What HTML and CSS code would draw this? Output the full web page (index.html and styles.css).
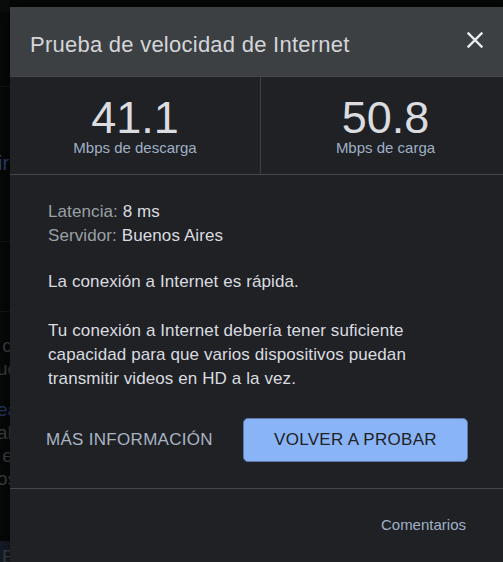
FILE: index.html
```html
<!DOCTYPE html>
<html lang="es">
<head>
<meta charset="utf-8">
<title>Prueba de velocidad de Internet</title>
<link rel="stylesheet" href="styles.css">
</head>
<body>
<div class="page">
  <div class="page-top"></div>
  <div class="page-row r1"></div>
  <div class="page-row r2"><span class="bg-link">ir</span></div>
  <div class="page-row r3"></div>
  <div class="page-text">
    <p class="bg-t">&nbsp;c</p>
    <p class="bg-t">ue</p>
    <p class="bg-l">ea</p>
    <p class="bg-t">ab</p>
    <p class="bg-t">&nbsp;e</p>
    <p class="bg-t">os</p>
  </div>
  <div class="page-bottom"><span>E</span></div>
</div>

<div class="dialog" role="dialog">
  <div class="dlg-head">
    <h1 class="dlg-title">Prueba de velocidad de Internet</h1>
    <button class="close" aria-label="Cerrar">
      <svg viewBox="0 0 24 24"><path d="M19 6.41 17.59 5 12 10.59 6.41 5 5 6.41 10.59 12 5 17.59 6.41 19 12 13.41 17.59 19 19 17.59 13.41 12z" fill="currentColor"/></svg>
    </button>
  </div>
  <div class="stats">
    <div class="stat">
      <div class="stat-num">41.1</div>
      <div class="stat-label">Mbps de descarga</div>
    </div>
    <div class="stat">
      <div class="stat-num">50.8</div>
      <div class="stat-label">Mbps de carga</div>
    </div>
  </div>
  <div class="dlg-body">
    <div class="meta">
      <div><span class="k">Latencia:</span> <span class="v">8 ms</span></div>
      <div><span class="k">Servidor:</span> <span class="v">Buenos Aires</span></div>
    </div>
    <p class="msg">La conexión a Internet es rápida.</p>
    <p class="msg">Tu conexión a Internet debería tener suficiente capacidad para que varios dispositivos puedan transmitir videos en HD a la vez.</p>
    <div class="actions">
      <button class="btn-text">MÁS INFORMACIÓN</button>
      <button class="btn-primary">VOLVER A PROBAR</button>
    </div>
  </div>
  <div class="dlg-foot">
    <a class="feedback">Comentarios</a>
  </div>
</div>
</body>
</html>
```
FILE: styles.css
```css
html, body {
  margin: 0;
  padding: 0;
  overflow: hidden;
  height: 100%;
}
body {
  background: #060707;
  font-family: "Liberation Sans", Arial, sans-serif;
  position: relative;
}
.page {
  height: 562px;
  width: 10px;
  overflow: hidden;
  display: flex;
  flex-direction: column;
}
.page-top {
  height: 12px;
  background: #0b0c0c;
}
.page-row { border-bottom: 1px solid #141616; }
.r1 { height: 74px; }
.r2 { height: 154px; display: flex; align-items: center; }
.bg-link {
  color: #2a3f6e;
  font-size: 20px;
  margin-left: -2px;
  white-space: nowrap;
  margin-top: -2px;
}
.r3 { height: 69px; }
.page-text {
  padding-top: 22px;
  margin-left: -3px;
}
.page-text p {
  margin: 0;
  font-size: 19px;
  line-height: 23px;
  white-space: nowrap;
  color: #3c3f42;
}
.page-text p.bg-l { color: #243660; margin-top: 18px; }
.page-bottom {
  margin-top: auto;
  height: 21px;
  background: #161b27;
  color: #3c3f42;
  font-size: 19px;
  overflow: hidden;
  padding-left: 2px;
  line-height: 32px;
}

/* dialog overlay */
.dialog {
  position: absolute;
  left: 10px;
  top: 7px;
  width: 500px;
  height: 580px;
  background: #202124;
  color: #dadce0;
  box-shadow: 0 0 12px rgba(0,0,0,0.6);
}
.dlg-head {
  height: 70px;
  background: #3c4043;
  border-bottom: 1px solid #45484b;
  display: flex;
  align-items: center;
  justify-content: space-between;
  padding: 0 21px 0 20px;
  box-sizing: border-box;
}
.dlg-title {
  margin: 0;
  font-weight: normal;
  font-size: 22px;
  letter-spacing: 0.25px;
  color: #d4d6d9;
  padding-top: 6px;
}
.close {
  background: none;
  border: none;
  padding: 0;
  color: #e8eaed;
  width: 28px;
  height: 28px;
  margin-top: -4px;
  cursor: pointer;
}
.close svg { display: block; width: 28px; height: 28px; }

.stats {
  display: grid;
  grid-template-columns: 250px 250px;
  border-bottom: 1px solid #45484b;
}
.stat {
  text-align: center;
  padding: 21px 0 16px;
}
.stat + .stat { border-left: 1px solid #3c4043; }
.stat-num {
  font-size: 45px;
  line-height: 40px;
  color: #dadce0;
}
.stat-label {
  font-size: 15px;
  line-height: 20px;
  color: #9fb0c6;
}

.dlg-body {
  padding: 25px 43px 26px 38px;
  font-size: 17px;
  letter-spacing: 0.1px;
  line-height: 24px;
  border-bottom: 1px solid #45484b;
}
.meta .k { color: #9aa0a6; }
.meta .v { color: #dadce0; }
.msg {
  margin: 22px 0 0;
  color: #dadce0;
}
.msg + .msg { margin-top: 25px; }
.actions {
  display: flex;
  justify-content: space-between;
  align-items: center;
  margin-top: 27px;
}
.btn-text {
  background: none;
  border: none;
  padding: 0;
  margin-left: -2px;
  font: inherit;
  font-size: 17px;
  letter-spacing: 0.3px;
  color: #a9b4c4;
}
.btn-primary {
  width: 225px;
  height: 44px;
  background: #8ab4f8;
  border: 1px solid #5e7ba8;
  border-radius: 5px;
  font: inherit;
  font-size: 17px;
  letter-spacing: 0.3px;
  color: #202124;
  padding: 0;
  margin-right: -1px;
}
.dlg-foot {
  display: flex;
  justify-content: flex-end;
  padding: 27px 44px 0 0;
}
.feedback {
  font-size: 15px;
  color: #9fb0c6;
}
```
